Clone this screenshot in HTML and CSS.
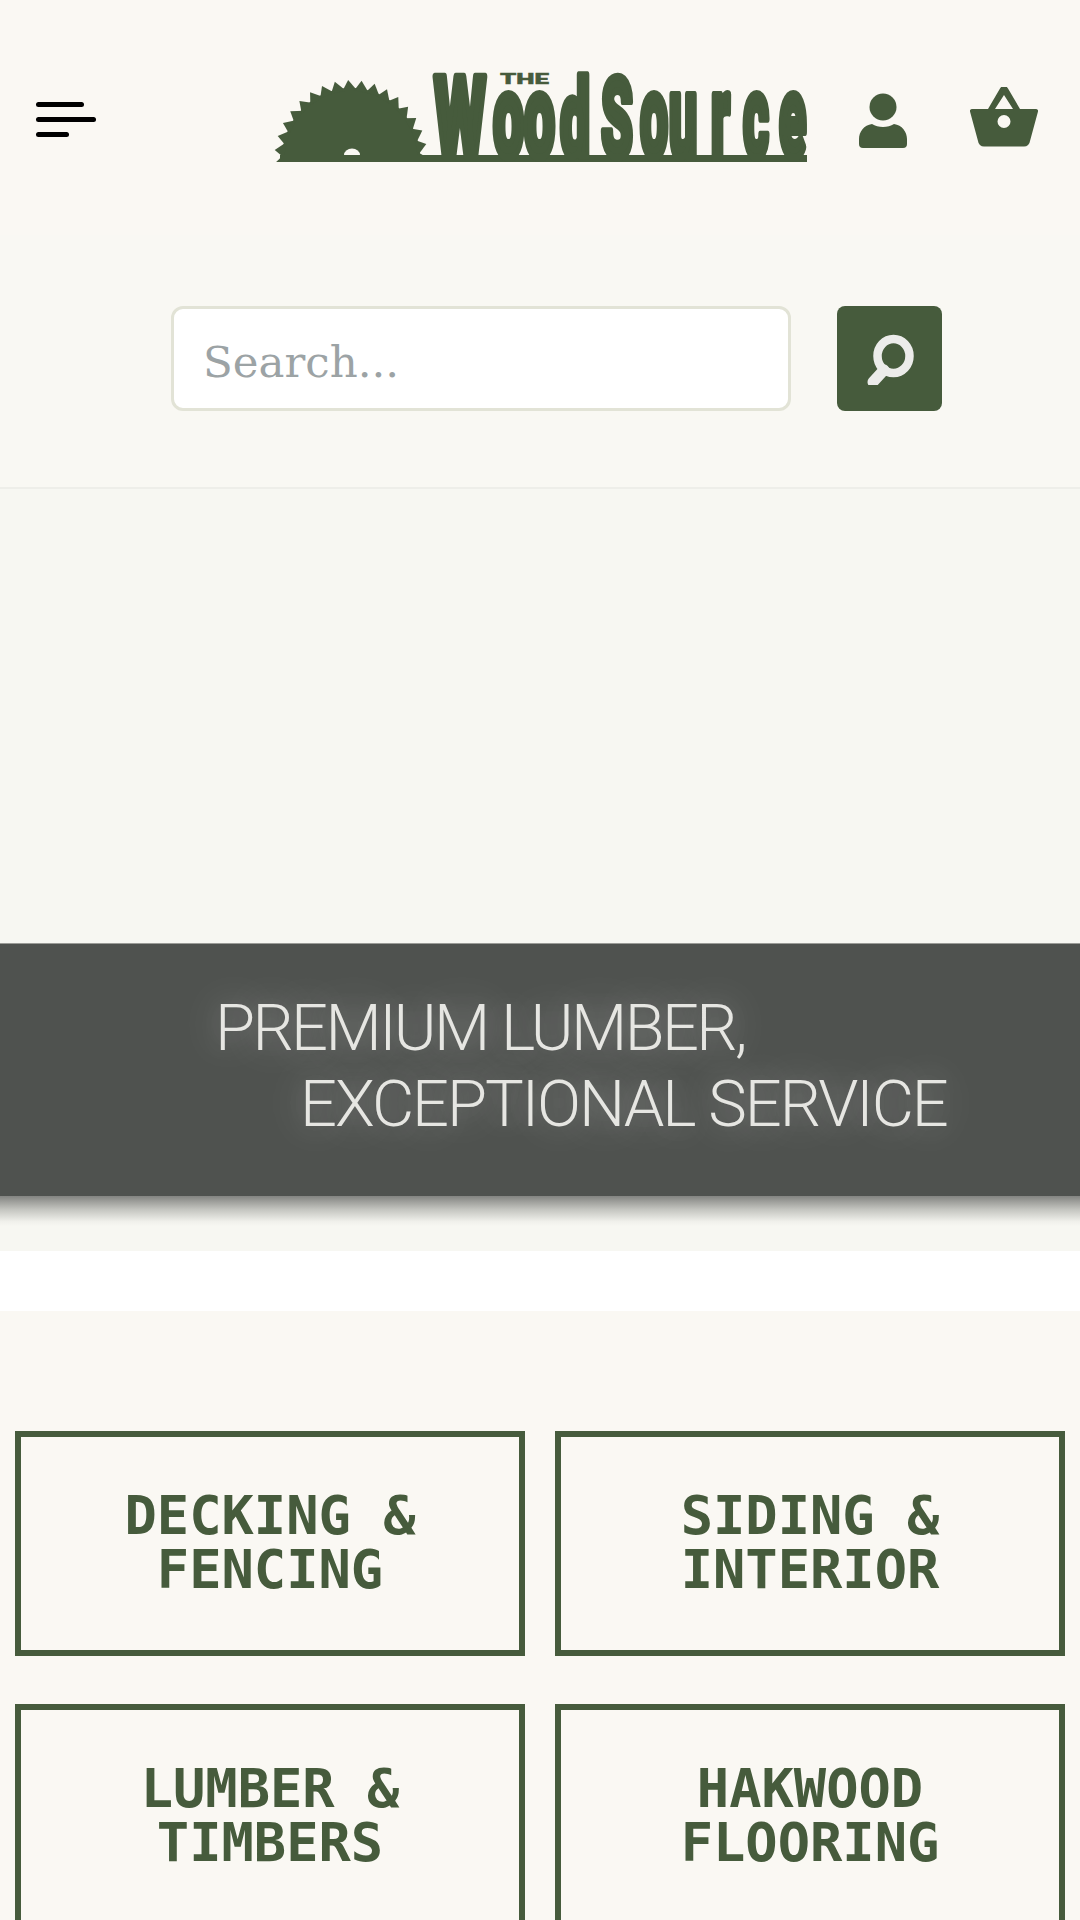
FILE: index.html
```html
<!DOCTYPE html>
<html lang="en">
<head>
<meta charset="utf-8">
<title>The WoodSource</title>
<link rel="stylesheet" href="styles.css">
</head>
<body>
<header class="site-header">
  <button class="menu-toggle" aria-label="Menu">
    <span class="bar bar-mid"></span>
    <span class="bar bar-long"></span>
    <span class="bar bar-short"></span>
  </button>
  <a class="logo" href="#" aria-label="The WoodSource">
    <svg width="530" height="90" viewBox="277 73 530 90" class="logo-svg">
      <defs>
        <path id="tooth" d="M7-70L-3-81L-9-70Z"/>
        <clipPath id="sawclip"><rect x="270" y="70" width="170" height="92"/></clipPath>
      </defs>
      <g clip-path="url(#sawclip)" class="ink">
        <g transform="translate(351 161) scale(.95 1)">
          <circle cx="0" cy="0" r="73"/>
          <use href="#tooth" transform="rotate(-100)"/>
          <use href="#tooth" transform="rotate(-90)"/>
          <use href="#tooth" transform="rotate(-80)"/>
          <use href="#tooth" transform="rotate(-70)"/>
          <use href="#tooth" transform="rotate(-60)"/>
          <use href="#tooth" transform="rotate(-50)"/>
          <use href="#tooth" transform="rotate(-40)"/>
          <use href="#tooth" transform="rotate(-30)"/>
          <use href="#tooth" transform="rotate(-20)"/>
          <use href="#tooth" transform="rotate(-10)"/>
          <use href="#tooth" transform="rotate(0)"/>
          <use href="#tooth" transform="rotate(10)"/>
          <use href="#tooth" transform="rotate(20)"/>
          <use href="#tooth" transform="rotate(30)"/>
          <use href="#tooth" transform="rotate(40)"/>
          <use href="#tooth" transform="rotate(50)"/>
          <use href="#tooth" transform="rotate(60)"/>
          <use href="#tooth" transform="rotate(70)"/>
          <use href="#tooth" transform="rotate(80)"/>
          <use href="#tooth" transform="rotate(90)"/>
        </g>
      </g>
      <rect class="ink" x="280" y="155" width="527" height="7"/>
      <path class="paper" d="M344 155a8 6.500 0 0 1 16 0Z"/>
      <text class="logo-the" x="500" y="84" textLength="49" lengthAdjust="spacingAndGlyphs">THE</text>
      <g class="logo-word">
        <text transform="translate(434 156) scale(1 1.11)" textLength="52" lengthAdjust="spacingAndGlyphs">W</text>
        <text transform="translate(493 157) scale(1 1.16)" textLength="62" lengthAdjust="spacingAndGlyphs">oo</text>
        <text transform="translate(560 156) scale(1 1.07)" textLength="30" lengthAdjust="spacingAndGlyphs">d</text>
        <text transform="translate(601 157) scale(1 1.11)" textLength="32" lengthAdjust="spacingAndGlyphs">S</text>
        <text transform="translate(640 157) scale(.5 1.16)" x="0 58 142 206 278">ource</text>
      </g>
    </svg>
  </a>
  <a class="icon-link user-link" href="#" aria-label="Account">
    <svg width="48" height="55" viewBox="0 0 48 55" class="ink">
      <circle cx="24" cy="14" r="13.500"/>
      <path d="M13 31c3 2 7 3 11 3s8-1 11-3c8 1 13 8 13 15v5a4 4 0 0 1-4 4H4a4 4 0 0 1-4-4v-5c0-7 5-14 13-15Z"/>
    </svg>
  </a>
  <a class="icon-link basket-link" href="#" aria-label="Cart">
    <svg width="68" height="60" viewBox="0 0 68 60" class="ink">
      <path fill-rule="evenodd" d="M2 22H18L30 1.500a4.500 4.500 0 0 1 8 0L50 22H66a2 2 0 0 1 2 2.500L60 54a6 6 0 0 1-6 5.500H14A6 6 0 0 1 8 54L0 24.500A2 2 0 0 1 2 22ZM25 22H43L34 8ZM34 28a6.500 6.500 0 1 0 0 13a6.500 6.500 0 0 0 0-13Z"/>
    </svg>
  </a>
</header>

<form class="search-row">
  <input class="search-input" type="text" placeholder="Search...">
  <button class="search-button" type="button" aria-label="Search">
    <svg width="52" height="52" viewBox="0 0 52 52" class="search-icon">
      <ellipse cx="29.500" cy="23" rx="16" ry="17"/>
      <line x1="20" y1="37" x2="9" y2="49"/>
    </svg>
  </button>
</form>

<section class="hero">
  <div class="hero-band">
    <h1 class="hero-title">
      <span class="hero-line hero-line-first">PREMIUM LUMBER,</span>
      <span class="hero-line hero-line-offset">EXCEPTIONAL SERVICE</span>
    </h1>
  </div>
  <div class="hero-shade"></div>
</section>

<div class="spacer"></div>

<main class="categories">
  <a class="category" href="#">DECKING &amp;<br>FENCING</a>
  <a class="category" href="#">SIDING &amp;<br>INTERIOR</a>
  <a class="category" href="#">LUMBER &amp;<br>TIMBERS</a>
  <a class="category" href="#">HAKWOOD<br>FLOORING</a>
</main>
</body>
</html>
```

FILE: styles.css
```css
* { box-sizing: border-box; }
html, body { margin: 0; padding: 0; height: 1920px; overflow: hidden; }
body { background: #faf8f3; font-family: "Liberation Sans", sans-serif; }

.ink { fill: #465b3c; }
.paper { fill: #faf8f3; }

.site-header {
  display: flex;
  align-items: center;
  height: 235px;
  padding-left: 36px;
}
.menu-toggle {
  display: flex;
  flex-direction: column;
  gap: 10px;
  width: 60px;
  padding: 0;
  margin-top: 3px;
  border: 0;
  background: none;
}
.bar { display: block; height: 5px; border-radius: 3px; background: #000; }
.bar-mid { width: 48px; }
.bar-long { width: 60px; }
.bar-short { width: 33px; }

.logo { display: block; margin-left: 181px; line-height: 0; }
.logo-svg { display: block; overflow: visible; }
.logo-the {
  font-family: Roboto, sans-serif;
  font-weight: 900;
  font-size: 15px;
  fill: #465b3c;
  stroke: #465b3c;
  stroke-width: 0.4px;
}
.logo-word text {
  font-family: Roboto, sans-serif;
  font-weight: 900;
  font-size: 100px;
  fill: #465b3c;
  stroke: #465b3c;
  stroke-width: 7px;
  stroke-linejoin: round;
}

.icon-link { display: block; line-height: 0; }
.user-link { margin-left: 52px; margin-top: 5px; }
.basket-link { margin-left: 63px; margin-top: -1px; }

.search-row {
  display: flex;
  gap: 46px;
  margin: 0;
  padding: 71px 0 76px 171px;
  background: #f9f8f3;
  border-bottom: 2px solid #eeeee9;
}
.search-input {
  width: 620px;
  height: 105px;
  padding: 6px 29px 0;
  border: 3px solid #e2e3d6;
  border-radius: 12px;
  background: #fff;
  font-family: "DejaVu Serif", serif;
  font-size: 43.500px;
  color: #333;
}
.search-input::placeholder { color: #9ca3a5; opacity: 1; }
.search-button {
  display: flex;
  align-items: center;
  justify-content: center;
  width: 105px;
  height: 105px;
  padding: 0;
  border: 0;
  border-radius: 8px;
  background: #465b3c;
}
.search-icon { fill: none; stroke: #ececea; stroke-linecap: round; }
.search-icon ellipse { stroke-width: 8.500px; }
.search-icon line { stroke-width: 11px; }

.hero {
  padding: 454px 0 25px;
  background: #f7f7f2;
}
.hero-band {
  height: 253px;
  padding: 46px 0 0 215px;
  background: #4f524f;
  border-top: 1px solid #9a9b97;
}
.hero-shade {
  height: 30px;
  background: linear-gradient(#838481, #c4c5c0 45%, #f0f0eb 85%, #f7f7f2);
}
.hero-title {
  margin: 0;
  font-family: Roboto, sans-serif;
  font-weight: 300;
  font-size: 65px;
  line-height: 76px;
  letter-spacing: -2.050px;
  color: #e6e6e2;
  text-shadow: 0 0 26px rgba(255, 255, 255, 0.2), 0 0 46px rgba(255, 255, 255, 0.3);
}
.hero-line { display: block; white-space: nowrap; }
.hero-line-first { letter-spacing: -2.600px; }
.hero-line-offset { margin-left: 85px; }

.spacer { height: 60px; background: #fff; }

.categories {
  display: grid;
  grid-template-columns: 510px 510px;
  grid-auto-rows: 225px;
  column-gap: 30px;
  row-gap: 48px;
  padding: 120px 15px 0;
}
.category {
  padding-top: 52px;
  border: 6px solid #465b3c;
  font-family: "DejaVu Sans Mono", monospace;
  font-weight: 700;
  font-size: 53.700px;
  line-height: 54px;
  color: #465b3c;
  text-align: center;
  text-decoration: none;
}
```
